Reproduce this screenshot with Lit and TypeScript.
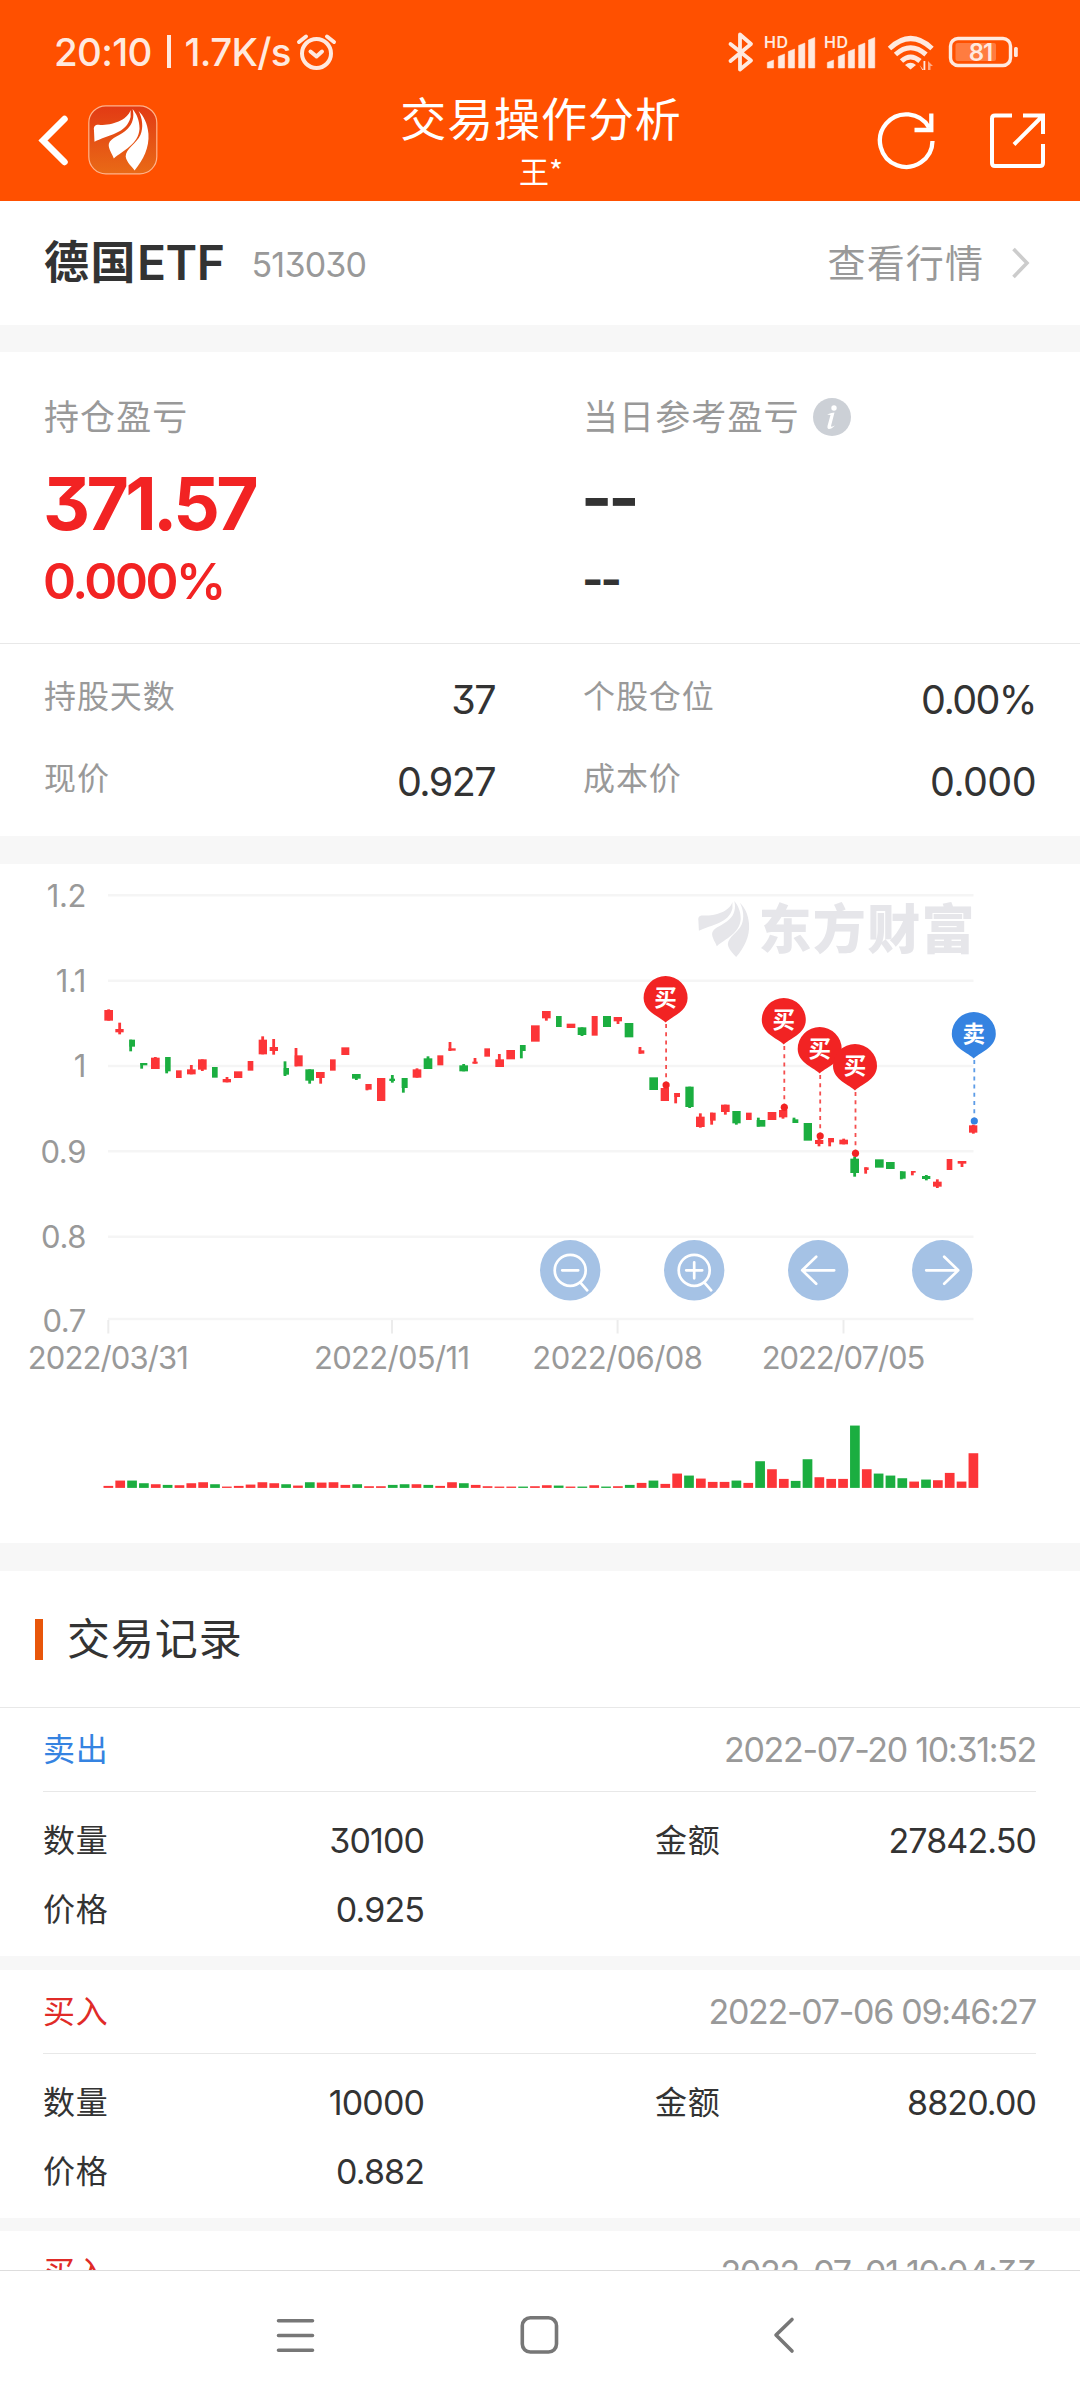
import { LitElement, html, svg, css } from "lit";
import { customElement, property } from "lit/decorators.js";

type Trade = { side: "buy" | "sell"; time: string; qty?: string; amount?: string; price?: string };

const TRADES: Trade[] = [
  { side: "sell", time: "2022-07-20 10:31:52", qty: "30100", amount: "27842.50", price: "0.925" },
  { side: "buy", time: "2022-07-06 09:46:27", qty: "10000", amount: "8820.00", price: "0.882" },
  { side: "buy", time: "2022-07-01 10:04:33" },
];

// Candle: direction, body left/top/right/bottom, then optional wick x/top/bottom, in thirds of a pixel.
type Candle = [string, number, number, number, number, number?, number?, number?];

const CANDLES: Candle[] = [
  ["r", 313, 450, 339, 482, 326, 448, 482], ["r", 346, 507, 371, 517, 359, 488, 523],
  ["g", 388, 539, 405, 560, 392, 539, 574], ["g", 421, 609, 442, 616, 425, 609, 626],
  ["r", 453, 593, 479, 627, 466, 591, 627], ["g", 496, 591, 512, 634, 500, 591, 640],
  ["r", 528, 631, 545, 654], ["r", 561, 628, 587, 643, 574, 615, 643],
  ["r", 594, 598, 620, 629, 607, 598, 633], ["g", 636, 621, 653, 653],
  ["r", 668, 657, 693, 667, 681, 651, 667], ["r", 702, 634, 727, 654],
  ["r", 743, 603, 760, 632], ["r", 776, 539, 801, 583, 788, 529, 583],
  ["r", 809, 561, 834, 573, 821, 537, 584], ["g", 851, 624, 867, 644, 855, 604, 648],
  ["r", 884, 586, 908, 619, 888, 564, 619], ["g", 916, 628, 942, 662, 929, 628, 671],
  ["r", 948, 636, 974, 654, 962, 636, 671], ["r", 990, 598, 1007, 632],
  ["r", 1024, 562, 1048, 585], ["g", 1056, 642, 1082, 656, 1069, 642, 660],
  ["r", 1097, 672, 1115, 689, 1101, 672, 691], ["r", 1131, 654, 1156, 723],
  ["g", 1168, 656, 1185, 663, 1177, 645, 668], ["g", 1205, 654, 1223, 684, 1210, 654, 698],
  ["r", 1238, 628, 1264, 653, 1251, 625, 653], ["g", 1271, 595, 1297, 627, 1284, 589, 627],
  ["r", 1312, 586, 1330, 616], ["r", 1345, 565, 1367, 572, 1350, 546, 573],
  ["g", 1378, 616, 1404, 634, 1391, 612, 634], ["r", 1417, 605, 1433, 611, 1425, 594, 611],
  ["r", 1453, 565, 1470, 590], ["r", 1486, 598, 1512, 621, 1498, 582, 621],
  ["r", 1519, 570, 1545, 598], ["g", 1560, 555, 1577, 573, 1564, 555, 595],
  ["r", 1593, 496, 1619, 545], ["r", 1626, 453, 1652, 475, 1639, 453, 482],
  ["g", 1668, 468, 1685, 501], ["r", 1700, 491, 1726, 504],
  ["g", 1733, 502, 1759, 525, 1746, 502, 528], ["r", 1775, 468, 1793, 527],
  ["g", 1809, 468, 1833, 501], ["r", 1841, 471, 1866, 484, 1854, 471, 492],
  ["g", 1874, 489, 1900, 532], ["r", 1916, 571, 1933, 581, 1920, 561, 581],
  ["g", 1948, 652, 1974, 690], ["r", 1982, 684, 2007, 723],
  ["r", 2023, 699, 2040, 711, 2027, 699, 730], ["g", 2056, 680, 2081, 741, 2069, 680, 744],
  ["r", 2088, 770, 2114, 801, 2101, 760, 803], ["r", 2130, 758, 2147, 782, 2135, 758, 794],
  ["r", 2163, 734, 2189, 756, 2176, 734, 764], ["g", 2197, 753, 2222, 790, 2209, 753, 794],
  ["r", 2238, 758, 2255, 780], ["g", 2270, 780, 2296, 800, 2275, 773, 800],
  ["r", 2303, 756, 2329, 780], ["r", 2337, 750, 2362, 772, 2349, 750, 776],
  ["g", 2378, 778, 2395, 789, 2382, 773, 789], ["g", 2411, 789, 2436, 842],
  ["r", 2445, 840, 2470, 852, 2457, 836, 859], ["r", 2485, 834, 2502, 847, 2489, 834, 859],
  ["r", 2518, 839, 2544, 853, 2531, 836, 853], ["g", 2551, 896, 2577, 939, 2564, 890, 950],
  ["r", 2593, 922, 2606, 930, 2597, 922, 941], ["g", 2625, 898, 2651, 923],
  ["g", 2658, 906, 2684, 927], ["g", 2700, 934, 2717, 956, 2704, 934, 958],
  ["r", 2733, 933, 2747, 938, 2737, 933, 946], ["g", 2766, 948, 2791, 957, 2779, 945, 961],
  ["r", 2799, 965, 2825, 980, 2812, 958, 984], ["r", 2840, 897, 2857, 930],
  ["r", 2873, 903, 2899, 911, 2886, 903, 921], ["r", 2907, 796, 2932, 818, 2920, 794, 821],
];

// Turnover bar heights, in thirds of a pixel.
const VOLUMES = [
  6, 22, 22, 14, 11, 9, 8, 14, 17, 11, 3, 6, 10, 17, 14, 11, 7, 17, 16, 17, 9, 11, 5, 5, 9, 11, 11, 9, 6, 17, 14, 9, 5, 2,
  2, 4, 5, 8, 7, 4, 3, 8, 4, 5, 9, 15, 22, 12, 43, 37, 28, 18, 18, 22, 15, 80, 56, 27, 21, 86, 32, 27, 27, 187, 56, 43,
  37, 29, 19, 25, 23, 45, 19, 104,
];

const PINS = [
  { side: "buy", x: 665.6, top: 976, dot: 1085 },
  { side: "buy", x: 783.8, top: 998, dot: 1107.3 },
  { side: "buy", x: 819.7, top: 1027, dot: 1136 },
  { side: "buy", x: 855, top: 1044, dot: 1153.3 },
  { side: "sell", x: 973.8, top: 1012, dot: 1121 },
];

const Y_TICKS = [
  ["1.2", 895.3], ["1.1", 980.7], ["1", 1066], ["0.9", 1151.3], ["0.8", 1236.7], ["0.7", 1319],
] as const;
const X_TICKS = [
  ["2022/03/31", 108.3, 158], ["2022/05/11", 392, 153], ["2022/06/08", 617.6, 167.5], ["2022/07/05", 843.5, 160.5],
] as const;

// Three-feather emblem on a 61x62 canvas.
const emblem = svg`
  <path d="M38 1C34 13 16 17 4 16Q0 17 1 22L1.500 33C15 26 34 25 38 8Z"/>
  <path d="M40 0C42 8 40 15 35 20C28 27 18 29 16 35C15 40 20 46 21 50C30 42 46 36 47 20C47 11 44 5 40 0Z"/>
  <path d="M46 2C50 9 51 19 48 26C44 35 33 40 33 48C34 54 39 58 42 62C51 51 57 39 56 25C55 14 51 7 46 2Z"/>`;

const fonts = css`
  :host { font-family: Inter, "Noto Sans CJK SC", sans-serif; font-feature-settings: "cv09"; }
  .zh { font-family: "Noto Sans CJK SC", sans-serif; }
  svg { display: block; }
`;

@customElement("status-bar")
class StatusBar extends LitElement {
  static styles = [fonts, css`
    :host { display: flex; justify-content: space-between; height: 82px; padding: 0 60px 0 54px; color: #ffe9df; }
    .left { display: flex; align-items: center; margin-top: 21px; height: 61px; font-size: 38.500px; font-weight: 500; letter-spacing: -0.700px; white-space: nowrap; }
    .alarm { margin-left: 5px; }
    .hd { font: 600 16px Inter, sans-serif; }
    .level { font: 600 24px Inter, sans-serif; letter-spacing: -1px; }
    .rule { width: 4px; height: 33px; margin: 0 14px 0 15px; background: currentColor; }
  `];
  signal(x: number) {
    const bars = [[2.3, 60], [13.3, 54], [23.3, 49], [33.6, 43], [43.5, 37.5]];
    return svg`
      <text class="hd" x=${x - 1} y="48" fill="currentColor" textLength="24">HD</text>
      ${bars.map(([dx, y]) => svg`<path fill="currentColor" d="M${x + dx} ${y + 2.5}L${x + dx + 6.3} ${y}V68H${x + dx}Z" stroke="currentColor" stroke-width="0.500" stroke-linejoin="round"/>`)}`;
  }
  render() {
    return html`
      <div class="left"><span>20:10</span><span class="rule"></span><span>1.7K/s</span>
        <svg class="alarm" width="42" height="40" viewBox="296 33 42 40" fill="none" stroke="currentColor" stroke-width="4" stroke-linecap="round" stroke-linejoin="round">
          <circle cx="316.500" cy="54.500" r="14.500"/><path d="M310.500 52.500l6 5l5.500-5M299 43l7-5.500M334 43l-7-5.500"/>
        </svg>
      </div>
      <svg width="300" height="82" viewBox="720 0 300 82">
        <path d="M730.500 44L751 60.500L740 69.500V34.500L751 44L730.500 61" fill="none" stroke="currentColor" stroke-width="3.800" stroke-linejoin="round" stroke-linecap="round"/>
        ${this.signal(765)}${this.signal(825)}
        <g fill="none" stroke="currentColor" stroke-width="5">
          <path d="M889.500 48.500Q910.500 28.500 932 48.500"/><path d="M895.500 54.500Q910.500 41 926 54.500"/><path d="M901.500 61Q910.500 53 920 61"/>
        </g>
        <path d="M905 65Q910.500 60.500 916 65L910.500 69.500Z" fill="currentColor"/>
        <path d="M919.500 65l4 5v-9h1.800v9h-3Z" fill="currentColor"/><path d="M928 70v-9l5 5h-2.500v4Z" fill="currentColor" opacity=".6"/>
        <rect x="950.500" y="38.500" width="60" height="27" rx="7.500" fill="none" stroke="currentColor" stroke-width="3.400"/>
        <rect x="955.500" y="43" width="40.500" height="18" rx="2" fill="#fff" opacity=".25"/>
        <rect x="1014" y="47" width="3.800" height="10" rx="1.500" fill="currentColor"/>
        <text class="level" x="980.500" y="61" text-anchor="middle" fill="currentColor">81</text>
      </svg>`;
  }
}

@customElement("title-bar")
class TitleBar extends LitElement {
  static styles = [fonts, css`
    :host { display: grid; grid-template-columns: 1fr auto 1fr; height: 119px; padding: 0 33px 0 35px; color: #fff; }
    .left { display: flex; gap: 20px; padding-top: 23px; }
    .right { display: flex; justify-content: flex-end; gap: 51px; padding-top: 26px; }
    .title { display: flex; flex-direction: column; align-items: center; }
    .name { font-size: 46px; letter-spacing: 0.900px; line-height: 54px; margin-top: 7px; }
    .user { font-size: 30px; line-height: 36px; margin: 9px 0 0 0; }
  `];
  render() {
    return html`
      <div class="left">
        <svg width="33" height="70" viewBox="35 105 33 70" fill="none" stroke="#fff" stroke-width="6.500" stroke-linecap="round"><path d="M64.500 119L43 140.500L64.500 162"/></svg>
        <svg width="70" height="70" viewBox="0 0 70 70">
          <defs><linearGradient id="tile" x2="0" y2="1"><stop stop-color="#e23a14"/><stop offset="1" stop-color="#e96a16"/></linearGradient></defs>
          <rect x="0.800" y="0.800" width="68" height="68" rx="17" fill="url(#tile)" stroke="#ffb48c" stroke-width="1.200"/>
          <g fill="#fff" transform="translate(5 4) scale(.99)">${emblem}</g>
        </svg>
      </div>
      <div class="title"><div class="name zh">交易操作分析</div><div class="user zh">王*</div></div>
      <div class="right">
        <svg width="60" height="64" viewBox="876 108 60 64" fill="none" stroke="#fff" stroke-width="4.300"><path d="M932.500 141A26.300 26.300 0 1 1 929 127.500M931.300 113.500V130H914.500"/></svg>
        <svg width="60" height="64" viewBox="987 108 60 64" fill="none" stroke="#fff" stroke-width="4"><path d="M1012 115.500H995Q992 115.500 992 118.500V163Q992 166 995 166H1040Q1043 166 1043 163V144M1023 115.500H1043V134M1042 116.500L1014 144.500"/></svg>
      </div>`;
  }
}

@customElement("holding-summary")
class HoldingSummary extends LitElement {
  static styles = [fonts, css`
    :host { display: block; background: #fff; color: #333; }
    .top { display: grid; grid-template-columns: 539px 1fr; height: 291px; padding-left: 44px; border-bottom: 1px solid #e8e8e8; box-sizing: content-box; }
    .label { display: flex; align-items: center; color: #999; font-size: 35px; letter-spacing: 1.100px; height: 50px; line-height: 50px; padding-top: 38px; }
    .info { margin: 4px 0 0 13px; }
    .big { font-size: 73px; font-weight: 700; line-height: 80px; margin: 24px 0 0 -1px; letter-spacing: -3.700px; }
    .small { font-size: 50px; font-weight: 600; line-height: 60px; margin: 7px 0 0 -1px; letter-spacing: -2.400px; }
    .up { color: #f22323; }
    .dash-big, .dash-small { font-weight: 700; }
    .dash-big { font-size: 67px; letter-spacing: -4px; line-height: 80px; margin: 18px 0 0 -2px; }
    .dash-small { font-size: 46px; letter-spacing: -3px; line-height: 60px; margin: 11px 0 0 -1px; }
    .facts { display: grid; grid-template-columns: 451px 453px; column-gap: 88px; grid-auto-rows: 82px; padding: 15px 0 13px 44px; height: 164px; }
    .fact { display: flex; justify-content: space-between; align-items: center; }
    .key { color: #999; font-size: 32px; letter-spacing: 0.900px; line-height: 50px; margin-top: -13px; }
    .val { font-size: 39.500px; letter-spacing: -1.600px; }
    .even { letter-spacing: -0.600px; }
  `];
  render() {
    const facts = [["持股天数", "37", ""], ["个股仓位", "0.00%", ""], ["现价", "0.927", ""], ["成本价", "0.000", "even"]];
    return html`
      <div class="top">
        <div><div class="label zh">持仓盈亏</div><div class="big up">371.57</div><div class="small up">0.000%</div></div>
        <div>
          <div class="label zh">当日参考盈亏
            <svg class="info" width="38" height="38" viewBox="0 0 38 38"><circle cx="19" cy="19" r="19" fill="#ccd0d6"/><circle cx="21" cy="10" r="2.700" fill="#fff"/><path d="M14 16.500Q19 14.500 21.500 14.500L18 28Q18 29.500 22 27.500Q18 31.500 15.500 31Q14 30.500 14.500 28L17.500 17Z" fill="#fff"/></svg>
          </div>
          <div class="dash-big">--</div><div class="dash-small">--</div>
        </div>
      </div>
      <div class="facts">
        ${facts.map(([k, v, c]) => html`<div class="fact"><span class="key zh">${k}</span><span class="val ${c}">${v}</span></div>`)}
      </div>`;
  }
}

@customElement("trade-chart")
class TradeChart extends LitElement {
  static styles = [fonts, css`
    :host { display: block; background: #fff; height: 679px; }
    .axis { font: 400 31px Inter, sans-serif; fill: #999; }
    .tick { letter-spacing: -0.400px; }
    .brand { font: 900 53px "Noto Sans CJK SC", sans-serif; fill: #e6e6ea; }
    .mark { font: 700 22.500px "Noto Sans CJK SC", sans-serif; fill: #fff; }
    .r { fill: #fc3538; }
    .g { fill: #1bae40; }
    .buy { fill: #f22323; stroke: #f22323; }
    .sell { fill: #3583e1; stroke: #3583e1; }
  `];
  pin(p: (typeof PINS)[number]) {
    const { x, top: t } = p;
    return svg`
      <g class=${p.side}>
        <path stroke="none" d="M${x} ${t + 46.5}C${x - 5} ${t + 41} ${x - 22} ${t + 36} ${x - 22} ${t + 22}A22 22 0 0 1 ${x + 22} ${t + 22}C${x + 22} ${t + 36} ${x + 5} ${t + 41} ${x} ${t + 46.5}Z"/>
        <path fill="none" stroke-width="1.800" stroke-dasharray="4 4.200" opacity=".8" d="M${x + 0.5} ${t + 48}V${p.dot}"/>
        <circle stroke="none" cx=${x + 0.5} cy=${p.dot} r="3.600"/>
      </g>
      <text class="mark" x=${x} y=${t + 30} text-anchor="middle">${p.side === "buy" ? "买" : "卖"}</text>`;
  }
  button(cx: number, glyph: unknown) {
    return svg`<circle cx=${cx} cy="1270.300" r="30.200" fill="#a5c2e5"/><g transform="translate(${cx} 1270.300)" fill="none" stroke="#fff" stroke-width="2.700" stroke-linecap="round" stroke-linejoin="round">${glyph}</g>`;
  }
  render() {
    return html`
      <svg width="1080" height="679" viewBox="0 864 1080 679">
        <g stroke="#f5f5f5" stroke-width="2.600">
          ${Y_TICKS.map(([, y]) => svg`<path d="M108 ${y}H973.500"/>`)}
          ${X_TICKS.map(([, x]) => svg`<path stroke="#ececec" stroke-width="2" d="M${x} 1320V1333.500"/>`)}
        </g>
        <g class="axis">
          ${Y_TICKS.map(([t, y]) => svg`<text class="tick" x="86" y=${(t === "0.7" ? y + 1.5 : y) + 11.3} text-anchor="end">${t}</text>`)}
          ${X_TICKS.map(([t, x, w]) => svg`<text x=${x - w / 2 - 1.5} y="1369" textLength=${w + 3}>${t}</text>`)}
        </g>
        <g fill="#e6e6ea" transform="translate(697.500 901) scale(.92 .905)">${emblem}</g>
        <text class="brand" x="758.500" y="948.500" textLength="216">东方财富</text>
        ${CANDLES.map(([c, l, t, r, b, wx, wt, wb]) => svg`
          <g class=${c}>
            <rect x=${l / 3} y=${860 + t / 3} width=${(r - l) / 3} height=${(b - t) / 3}/>
            ${wx === undefined ? "" : svg`<rect x=${wx / 3 - 1.4} y=${860 + wt! / 3} width="2.800" height=${(wb! - wt!) / 3}/>`}
          </g>`)}
        ${PINS.map((p) => this.pin(p))}
        ${this.button(570.2, svg`<circle r="15.500"/><path d="M-8 0H8M10 12L17 20"/>`)}
        ${this.button(694.2, svg`<circle r="15.500"/><path d="M-8 0H8M0-8V8M10 12L17 20"/>`)}
        ${this.button(818.2, svg`<path d="M16 0H-16M-2-13.500L-16 0L-2 13.500"/>`)}
        ${this.button(942.2, svg`<path d="M-16 0H16M2-13.500L16 0L2 13.500"/>`)}
        ${VOLUMES.map((v, i) => svg`<rect class=${CANDLES[i][0]} x=${103.5 + i * 11.85} y=${1487.9 - Math.max(v, 4) / 3} width="9.700" height=${Math.max(v, 4) / 3}/>`)}
      </svg>`;
  }
}

@customElement("trade-card")
class TradeCard extends LitElement {
  @property({ attribute: false }) trade!: Trade;
  static styles = [fonts, css`
    :host { display: block; height: 248px; flex: none; padding: 0 44px 0 43px; background: #fff; color: #333; font-size: 34px; letter-spacing: -0.900px; }
    .head { display: flex; justify-content: space-between; align-items: center; height: 83px; border-bottom: 1px solid #e8e8e8; }
    .zh { font-size: 32px; letter-spacing: 0.700px; line-height: 50px; margin-top: -5px; }
    .time { color: #999; letter-spacing: -1.300px; }
    .buy { color: #e02b28; }
    .sell { color: #3583e1; }
    .grid { display: grid; grid-template-columns: 381px 381px; column-gap: 231px; grid-auto-rows: 69px; padding-top: 14px; }
    .pair { display: flex; justify-content: space-between; align-items: center; }
    .wide { grid-column: 1; }
  `];
  render() {
    const t = this.trade;
    return html`
      <div class="head"><span class="zh ${t.side}">${t.side === "buy" ? "买入" : "卖出"}</span><span class="time">${t.time}</span></div>
      ${t.qty
        ? html`<div class="grid">
            <div class="pair"><span class="zh">数量</span><span>${t.qty}</span></div>
            <div class="pair"><span class="zh">金额</span><span>${t.amount}</span></div>
            <div class="pair wide"><span class="zh">价格</span><span>${t.price}</span></div>
          </div>`
        : ""}`;
  }
}

@customElement("app-root")
class AppRoot extends LitElement {
  static styles = [fonts, css`
    :host { display: flex; flex-direction: column; width: 1080px; height: 2400px; overflow: hidden; background: #f7f7f7; color: #333; }
    .header { flex: none; height: 201px; background: #ff5000; }
    .body { flex: 1; min-height: 0; overflow: hidden; display: flex; flex-direction: column; }
    .body > * { flex: none; }
    .stock { display: flex; align-items: center; height: 124px; padding: 0 50px 0 44px; background: #fff; margin-bottom: 27px; }
    .stock-name { display: flex; align-items: center; font-size: 45px; font-weight: 700; letter-spacing: 1.500px; line-height: 60px; margin-top: -6px; }
    .latin { font: 600 48px/60px Inter, sans-serif; letter-spacing: -0.500px; margin-top: 6px; }
    .code { font-size: 34px; color: #999; margin: 2px 0 0 27px; letter-spacing: -0.800px; }
    .more { margin-left: auto; font-size: 38px; letter-spacing: 1.100px; color: #999; line-height: 50px; margin-top: -4px; }
    .chevron { margin-left: 26px; }
    .summary { margin-bottom: 28px; }
    .chart { margin-bottom: 28px; }
    .section { display: flex; align-items: center; gap: 24px; height: 136px; padding-left: 35px; background: #fff; border-bottom: 1px solid #e8e8e8; }
    .bar { width: 8px; height: 41px; background: #e8560a; }
    .section-title { font-size: 43px; letter-spacing: 0.900px; line-height: 60px; margin-top: -6px; }
    .cards { display: flex; flex-direction: column; gap: 13.600px; }
    .nav { flex: none; height: 128px; border-top: 1px solid #ddd; background: #fff; padding-top: 1px; }
  `];
  render() {
    return html`
      <div class="header"><status-bar></status-bar><title-bar></title-bar></div>
      <div class="body">
        <div class="stock">
          <div class="stock-name zh">德国<span class="latin">ETF</span></div>
          <span class="code">513030</span>
          <span class="more zh">查看行情</span>
          <svg class="chevron" width="20" height="34" viewBox="0 0 20 34" fill="none" stroke="#ccc" stroke-width="3.600"><path d="M3.500 3L17 17L3.500 31"/></svg>
        </div>
        <holding-summary class="summary"></holding-summary>
        <trade-chart class="chart"></trade-chart>
        <div class="section"><div class="bar"></div><div class="section-title zh">交易记录</div></div>
        <div class="cards">${TRADES.map((t) => html`<trade-card .trade=${t}></trade-card>`)}</div>
      </div>
      <div class="nav">
        <svg width="1080" height="128" viewBox="0 2272 1080 128" fill="none" stroke="#777" stroke-width="3.600" stroke-linecap="round" stroke-linejoin="round">
          <path d="M278.500 2320.700H312.500M278.500 2335.500H312.500M278.500 2350.300H312.500"/>
          <rect x="522.300" y="2317.800" width="34.200" height="34.200" rx="8"/>
          <path d="M792 2319.500L776 2335L792 2351"/>
        </svg>
      </div>`;
  }
}
